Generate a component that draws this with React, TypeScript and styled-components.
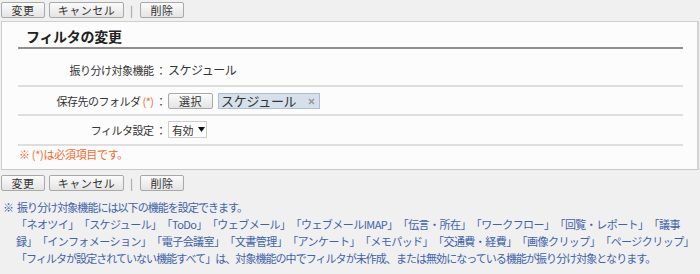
import React from "react";
import styled, { createGlobalStyle } from "styled-components";

const Global = createGlobalStyle`
  html, body { margin: 0; padding: 0; background: #f0f0f0; }
  body {
    font-family: "Noto Sans CJK JP", "Noto Sans", sans-serif;
    font-size: 11px;
    color: #333;
    text-spacing-trim: space-all;
  }
  * { text-spacing-trim: space-all; }
`;

const Page = styled.div`
  width: 700px;
  height: 274px;
  overflow: hidden;
`;

const ButtonBar = styled.div<{ $top?: number }>`
  display: flex;
  align-items: center;
  gap: 4px;
  padding: ${(p) => p.$top ?? 2}px 0 0 1px;
  height: 16px;
`;

const Btn = styled.button<{ $w: number }>`
  width: ${(p) => p.$w}px;
  height: 16px;
  padding: 0;
  border: 1px solid #a9a9a9;
  border-radius: 2px;
  background: linear-gradient(#fbfbfb, #e4e4e4);
  font-family: inherit;
  font-size: 11px;
  line-height: 14px;
  letter-spacing: 0.5px;
  color: #333;
  box-sizing: border-box;
`;

const Sep = styled.span`
  color: #888;
  font-size: 11px;
  margin: 0 3px 0 2px;
`;

const Panel = styled.div`
  margin: 3px 1px 0 1px;
  background: #fcfcfc;
  border: 1px solid #cfcfcf;
  border-right: 2px solid #d4d4d4;
  border-bottom: 1px solid #c8c8c8;
  padding: 0 14px 8px 16px;
  height: 149px;
  box-sizing: border-box;
`;

const Title = styled.h2`
  margin: 0;
  padding: 5px 0 2px 8px;
  font-size: 14px;
  font-weight: bold;
  letter-spacing: -0.3px;
  line-height: 18px;
  color: #222;
  border-bottom: 2px solid #8e8e8e;
`;

const Row = styled.div<{ $pt: number; $pb: number }>`
  display: grid;
  grid-template-columns: 148px 1fr;
  column-gap: 2px;
  align-items: center;
  padding: ${(p) => p.$pt}px 0 ${(p) => p.$pb}px;
  border-bottom: 2px solid #dedede;
`;

const Label = styled.div`
  text-align: right;
  line-height: 14px;
  letter-spacing: -0.5px;
  color: #333;
`;

const Req = styled.span`
  color: #f06a2a;
  margin-left: 2px;
`;

const Colon = styled.span`
  margin-left: 2px;
`;

const Value = styled.div`
  display: flex;
  align-items: center;
  gap: 5px;
  line-height: 14px;
  font-size: 12px;
  letter-spacing: -0.5px;
`;

const Pill = styled.div`
  width: 102px;
  height: 16px;
  box-sizing: border-box;
  background: #d5e0eb;
  border: 1px solid #aebdd0;
  display: flex;
  align-items: center;
  justify-content: space-between;
  padding: 0 4px 0 2px;
  font-size: 13px;
  letter-spacing: -0.3px;
  color: #333;
`;

const Select = styled.div`
  width: 39px;
  height: 17px;
  box-sizing: border-box;
  background: #fff;
  border: 1px solid #cdcdcd;
  display: flex;
  align-items: center;
  gap: 5px;
  padding-left: 3px;
  font-size: 11px;
  letter-spacing: -0.4px;
`;

const Required = styled.div`
  padding: 1px 0 0 1px;
  line-height: 14px;
  color: #f26a2c;
  letter-spacing: -0.3px;
`;

const Notes = styled.div`
  padding: 8px 0 0 3px;
  color: #3f62a8;
  line-height: 17px;
`;

const Line = styled.div<{ $indent?: boolean; $tight?: boolean }>`
  white-space: nowrap;
  padding-left: ${(p) => (p.$indent ? 13 : 0)}px;
  letter-spacing: ${(p) => (p.$tight ? -0.95 : -0.55)}px;
`;

const Mark = styled.span`
  margin-right: 4px;
`;

const CloseIcon = () => (
  <svg width="7" height="7" viewBox="0 0 7 7">
    <path d="M1 1L6 6M6 1L1 6" stroke="#9a9a9a" strokeWidth="1.6" />
  </svg>
);

const DownArrow = () => (
  <svg width="7" height="5" viewBox="0 0 7 5">
    <path d="M0 0H7L3.5 5Z" fill="#111" />
  </svg>
);

const Buttons = ({ top }: { top?: number }) => (
  <ButtonBar $top={top}>
    <Btn $w={44}>変更</Btn>
    <Btn $w={75}>キャンセル</Btn>
    <Sep>|</Sep>
    <Btn $w={44}>削除</Btn>
  </ButtonBar>
);

export default function App() {
  return (
    <Page>
      <Global />
      <Buttons top={2} />
      <Panel>
        <Title>フィルタの変更</Title>
        <Row $pt={14} $pb={8}>
          <Label>
            振り分け対象機能<Colon>：</Colon>
          </Label>
          <Value>スケジュール</Value>
        </Row>
        <Row $pt={6} $pb={5}>
          <Label>
            保存先のフォルダ<Req>(*)</Req>
            <Colon>：</Colon>
          </Label>
          <Value>
            <Btn $w={45}>選択</Btn>
            <Pill>
              <span>スケジュール</span>
              <CloseIcon />
            </Pill>
          </Value>
        </Row>
        <Row $pt={5} $pb={6}>
          <Label>
            フィルタ設定<Colon>：</Colon>
          </Label>
          <Value>
            <Select>
              有効
              <DownArrow />
            </Select>
          </Value>
        </Row>
        <Required>※ (*)は必須項目です。</Required>
      </Panel>
      <Buttons top={5} />
      <Notes>
        <Line $tight>
          <Mark>※</Mark>振り分け対象機能には以下の機能を設定できます。
        </Line>
        <Line $indent>
          「ネオツイ」「スケジュール」「ToDo」「ウェブメール」「ウェブメールIMAP」「伝言・所在」「ワークフロー」「回覧・レポート」「議事
        </Line>
        <Line $indent>
          録」「インフォメーション」「電子会議室」「文書管理」「アンケート」「メモパッド」「交通費・経費」「画像クリップ」「ページクリップ」
        </Line>
        <Line $indent $tight>
          「フィルタが設定されていない機能すべて」は、対象機能の中でフィルタが未作成、または無効になっている機能が振り分け対象となります。
        </Line>
      </Notes>
    </Page>
  );
}
